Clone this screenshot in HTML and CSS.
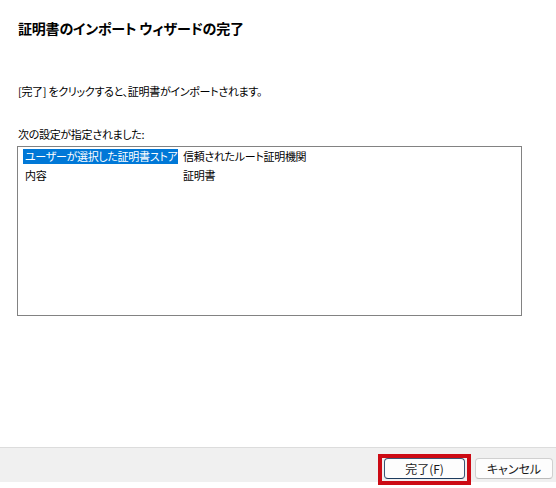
FILE: index.html
```html
<!DOCTYPE html>
<html lang="ja">

<head>
  <meta charset="UTF-8">
  <meta name="viewport" content="width=device-width, initial-scale=1.0">
  <title>証明書のインポート ウィザード</title>
  <link rel="stylesheet" href="styles.css">
</head>

<body>
  <div class="wizard">
    <div class="page">
      <h1 class="heading">証明書のインポート ウィザードの完了</h1>
      <p class="lead">[完了] をクリックすると、証明書がインポートされます。</p>
      <p class="label">次の設定が指定されました:</p>
      <ul class="summary">
        <li class="row">
          <span class="key"><span class="selected">ユーザーが選択した証明書ストア</span></span>
          <span class="val">信頼されたルート証明機関</span>
        </li>
        <li class="row">
          <span class="key"><span class="cell">内容</span></span>
          <span class="val">証明書</span>
        </li>
      </ul>
    </div>

    <div class="footer">
      <div class="mark">
        <button class="btn primary">完了(F)</button>
      </div>
      <button class="btn">キャンセル</button>
    </div>
  </div>
</body>

</html>
```

FILE: styles.css
```css
* {
  margin: 0;
  padding: 0;
  box-sizing: border-box;
}

body {
  background: #fff;
  color: #000;
  font-family: "Noto Sans CJK JP", "Noto Sans", sans-serif;
  font-feature-settings: "palt";
  font-size: 11px;
  letter-spacing: -0.3px;
}

.wizard {
  display: flex;
  flex-direction: column;
  height: 488px;
}

.page {
  flex: 1;
  padding: 18px 34px 0 17px;
}

.heading {
  font-size: 14px;
  font-weight: bold;
  line-height: 20px;
  letter-spacing: -0.2px;
  padding-left: 1px;
}

.lead {
  line-height: 16px;
  margin-top: 45px;
  padding-left: 1px;
}

.label {
  line-height: 16px;
  margin-top: 27px;
  padding-left: 1px;
}

.summary {
  list-style: none;
  height: 170px;
  margin-top: 4px;
  border: 1px solid #828282;
  padding: 2px 5px;
}

.row {
  display: flex;
  height: 19px;
  line-height: 15px;
}

.key {
  width: 160px;
  flex: none;
}

.selected,
.cell {
  display: inline-block;
  height: 15px;
  padding: 0 1px 0 2px;
}

.selected {
  background: #0078d7;
  color: #fff;
}

.footer {
  display: flex;
  justify-content: flex-end;
  align-items: flex-start;
  gap: 4px;
  height: 35px;
  margin-bottom: 6px;
  padding: 6px 3px 0 0;
  background: #f0f0f0;
  border-top: 1px solid #dcdcdc;
}

.mark {
  border: 4px solid #cc0a14;
  padding: 0 2px 2px 2px;
}

.btn {
  width: 78px;
  height: 21px;
  margin-top: 4px;
  background: #fdfdfd;
  border: 1px solid #d0d0d0;
  border-bottom-color: #bcbcbc;
  border-radius: 4px;
  font-family: inherit;
  font-feature-settings: "palt";
  font-size: 12px;
  color: #1a1a1a;
}

.mark .btn {
  width: 81px;
  margin-top: 0;
  border-color: #3a5675;
  border-bottom-color: #1d3b5e;
}
```
